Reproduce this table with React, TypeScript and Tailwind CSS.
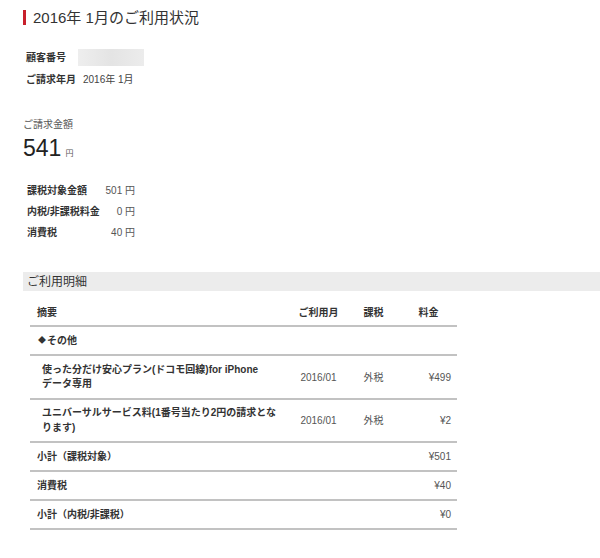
import React from "react";

const font = { fontFamily: '"Liberation Sans", "Noto Sans CJK JP", sans-serif' };

function Row({ label, value }: { label: string; value: string }) {
  return (
    <div className="flex items-center h-[21px]">
      <div className="w-[78px] text-[10px] font-bold text-[#333]">{label}</div>
      <div className="w-[30px] text-right text-[10px] text-[#555]">{value}</div>
    </div>
  );
}

function ItemRow({
  desc,
  month,
  tax,
  fee,
  h,
}: {
  desc: React.ReactNode;
  month: string;
  tax: string;
  fee: string;
  h: string;
}) {
  return (
    <div className={`grid grid-cols-[260px_57px_53px_57px] items-center border-b-2 border-[#c2c2c2] ${h}`}>
      <div className="pl-[12px] text-[10px] leading-[14.5px] font-bold text-[#333]">{desc}</div>
      <div className="text-center text-[10px] text-[#555]">{month}</div>
      <div className="text-center text-[10px] text-[#555]">{tax}</div>
      <div className="text-right pr-[6px] text-[10px] text-[#555]">{fee}</div>
    </div>
  );
}

function SumRow({ label, value }: { label: string; value: string }) {
  return (
    <div className="flex items-center justify-between h-[29px] border-b-2 border-[#c2c2c2]">
      <div className="pl-[7px] text-[10px] font-bold text-[#333]">{label}</div>
      <div className="pr-[6px] text-[10px] text-[#555]">{value}</div>
    </div>
  );
}

export default function App() {
  return (
    <div className="w-[600px] h-[558px] bg-white overflow-hidden" style={font}>
      {/* Title */}
      <div className="pt-[8px] pl-[23px] flex items-center">
        <div className="w-[3px] h-[15px] bg-[#c8202c] mr-[7px]" />
        <div className="text-[15px] leading-[19px] text-[#333]">2016年 1月のご利用状況</div>
      </div>

      {/* Info */}
      <div className="mt-[19px] pl-[26px]">
        <div className="flex items-center h-[22px]">
          <div className="w-[52px] text-[10px] font-bold text-[#333]">顧客番号</div>
          <div className="w-[66px] h-[17px] bg-gradient-to-r from-[#eeeeee] via-[#e4e4e4] to-[#ececec]" />
        </div>
        <div className="flex items-center h-[22px]">
          <div className="w-[52px] text-[10px] font-bold text-[#333]">ご請求年月</div>
          <div className="pl-[5px] text-[10px] text-[#444]">2016年 1月</div>
        </div>
      </div>

      {/* Amount */}
      <div className="mt-[28px] pl-[23px]">
        <div className="text-[10px] leading-[14px] text-[#555]">ご請求金額</div>
        <div className="mt-[4px] flex items-baseline">
          <span className="text-[23px] leading-[24px] text-[#222]">541</span>
          <span className="ml-[4px] text-[8px] text-[#555]">円</span>
        </div>
      </div>

      {/* Tax breakdown */}
      <div className="mt-[20px] pl-[27px]">
        <Row label="課税対象金額" value="501 円" />
        <Row label="内税/非課税料金" value="0 円" />
        <Row label="消費税" value="40 円" />
      </div>

      {/* Section header */}
      <div className="mt-[29px] ml-[23px] h-[19px] bg-[#ececec] pl-[4px] flex items-center">
        <span className="text-[12px] text-[#333]">ご利用明細</span>
      </div>

      {/* Table */}
      <div className="mt-[8px] ml-[30px] w-[427px]">
        <div className="grid grid-cols-[260px_57px_53px_57px] items-center h-[28px] border-b-2 border-[#c2c2c2]">
          <div className="pl-[7px] text-[10px] font-bold text-[#333]">摘要</div>
          <div className="text-center text-[10px] font-bold text-[#333]">ご利用月</div>
          <div className="text-center text-[10px] font-bold text-[#333]">課税</div>
          <div className="text-center text-[10px] font-bold text-[#333]">料金</div>
        </div>
        <div className="flex items-center h-[29px] border-b-2 border-[#c2c2c2]">
          <div className="pl-[8px] flex items-center text-[10px] font-bold text-[#333]">
            <span className="text-[8px] mr-[1px]">◆</span>
            <span>その他</span>
          </div>
        </div>
        <ItemRow
          h="h-[44px]"
          desc={
            <>
              使った分だけ安心プラン(ドコモ回線)for iPhone
              <br />
              データ専用
            </>
          }
          month="2016/01"
          tax="外税"
          fee="¥499"
        />
        <ItemRow
          h="h-[43px]"
          desc={
            <>
              ユニバーサルサービス料(1番号当たり2円の請求とな
              <br />
              ります)
            </>
          }
          month="2016/01"
          tax="外税"
          fee="¥2"
        />
        <SumRow label="小計（課税対象）" value="¥501" />
        <SumRow label="消費税" value="¥40" />
        <SumRow label="小計（内税/非課税）" value="¥0" />
      </div>
    </div>
  );
}
